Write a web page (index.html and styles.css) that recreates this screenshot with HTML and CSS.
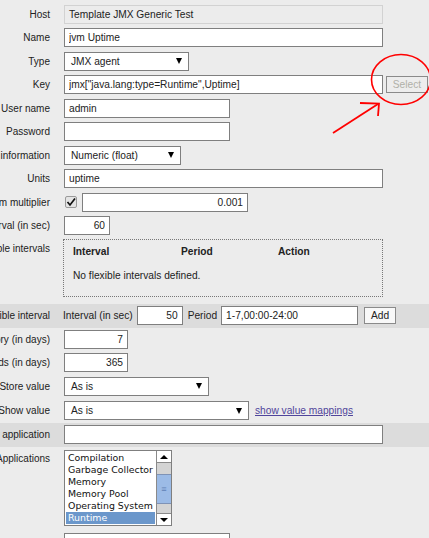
FILE: index.html
```html
<!DOCTYPE html>
<html>
<head>
    <title>Item configuration</title>
    <link rel="stylesheet" href="styles.css">
</head>
<body>
    <div class="form">
        <div class="row">
            <div class="label">Host</div>
            <div class="field"><div class="static w-wide">Template JMX Generic Test</div></div>
        </div>
        <div class="row">
            <div class="label">Name</div>
            <div class="field"><input class="text w-wide" type="text" value="jvm Uptime"></div>
        </div>
        <div class="row">
            <div class="label">Type</div>
            <div class="field"><div class="select w-type"><span>JMX agent</span><i class="arrow"></i></div></div>
        </div>
        <div class="row">
            <div class="label">Key</div>
            <div class="field">
                <input class="text w-wide" type="text" value='jmx["java.lang:type=Runtime",Uptime]'>
                <button class="btn btn-select" disabled>Select</button>
            </div>
        </div>
        <div class="row">
            <div class="label">User name</div>
            <div class="field"><input class="text w-user" type="text" value="admin"></div>
        </div>
        <div class="row">
            <div class="label">Password</div>
            <div class="field"><input class="text w-user" type="password" value=""></div>
        </div>
        <div class="row">
            <div class="label">Type of information</div>
            <div class="field"><div class="select w-info"><span>Numeric (float)</span><i class="arrow"></i></div></div>
        </div>
        <div class="row">
            <div class="label">Units</div>
            <div class="field"><input class="text w-wide" type="text" value="uptime"></div>
        </div>
        <div class="row">
            <div class="label">Use custom multiplier</div>
            <div class="field">
                <span class="check">
                    <svg width="10" height="10" viewBox="0 0 10 10"><path d="M1.5 5 L4 8 L9 1.5" fill="none" stroke="#111" stroke-width="1.7"/></svg>
                </span>
                <input class="text num w-mult" type="text" value="0.001">
            </div>
        </div>
        <div class="row">
            <div class="label">Update interval (in sec)</div>
            <div class="field"><input class="text num w-small" type="text" value="60"></div>
        </div>
        <div class="row row-top row-flex">
            <div class="label">Flexible intervals</div>
            <div class="field">
                <div class="intervals">
                    <div class="int-head">
                        <span class="col-interval">Interval</span>
                        <span class="col-period">Period</span>
                        <span>Action</span>
                    </div>
                    <div class="int-empty">No flexible intervals defined.</div>
                </div>
            </div>
        </div>
        <div class="row band">
            <div class="label">New flexible interval</div>
            <div class="field field-new">
                <span>Interval (in sec)</span>
                <input class="text num w-small" type="text" value="50">
                <span class="period-label">Period</span>
                <input class="text w-period" type="text" value="1-7,00:00-24:00">
                <button class="btn btn-add">Add</button>
            </div>
        </div>
        <div class="row">
            <div class="label">Keep history (in days)</div>
            <div class="field"><input class="text num w-days" type="text" value="7"></div>
        </div>
        <div class="row">
            <div class="label">Keep trends (in days)</div>
            <div class="field"><input class="text num w-days" type="text" value="365"></div>
        </div>
        <div class="row">
            <div class="label">Store value</div>
            <div class="field"><div class="select w-store"><span>As is</span><i class="arrow"></i></div></div>
        </div>
        <div class="row row-show">
            <div class="label">Show value</div>
            <div class="field">
                <div class="select w-show"><span>As is</span><i class="arrow"></i></div>
                <a class="mappings" href="#">show value mappings</a>
            </div>
        </div>
        <div class="row band">
            <div class="label">New application</div>
            <div class="field"><input class="text w-wide" type="text" value=""></div>
        </div>
        <div class="row row-top row-apps">
            <div class="label">Applications</div>
            <div class="field">
                <div class="listbox">
                    <ul class="options">
                        <li>Compilation</li>
                        <li>Garbage Collector</li>
                        <li>Memory</li>
                        <li>Memory Pool</li>
                        <li>Operating System</li>
                        <li class="selected">Runtime</li>
                    </ul>
                    <div class="scrollbar">
                        <div class="sb-btn"><i class="up"></i></div>
                        <div class="sb-track"><div class="sb-thumb">&#8801;</div></div>
                        <div class="sb-btn"><i class="down"></i></div>
                    </div>
                </div>
            </div>
        </div>
        <div class="row">
            <div class="label">Populates host profile field</div>
            <div class="field"><input class="text w-user" type="text" value=""></div>
        </div>
    </div>

    <!-- hand drawn marks over the key row -->
    <svg class="marks" width="429" height="538" viewBox="0 0 429 538">
        <ellipse cx="401" cy="79.5" rx="29.5" ry="25" fill="none" stroke="#f00" stroke-width="1.6"/>
        <path d="M333 133 L378 104" fill="none" stroke="#f00" stroke-width="1.8"/>
        <path d="M360 103 L379 103.5 L378 116" fill="none" stroke="#f00" stroke-width="1.8"/>
    </svg>
</body>
</html>
```

FILE: styles.css
```css
body {
    margin: 0;
    background-color: #ececec;
    font-family: "Liberation Sans", Arial, sans-serif;
    font-size: 10.2px;
    color: #222;
    overflow: hidden;
}
.form {
    padding-top: 2.25px;
}
.row {
    display: flex;
    align-items: center;
    height: 23.5px;
}
.row-top {
    align-items: flex-start;
    height: auto;
}
.row-show {
    height: 25px;
}
.band {
    background-color: #dcdcdc;
}
.label {
    width: 50px;
    flex: none;
    display: flex;
    justify-content: flex-end;
    white-space: nowrap;
    font-size: 10px;
}
.field {
    margin-left: 14px;
    display: flex;
    align-items: center;
}

/* inputs */
.text {
    box-sizing: border-box;
    height: 19px;
    margin: 0;
    padding: 0 4px;
    border: 1px solid #7f7f7f;
    background-color: #fff;
    font: inherit;
    color: #222;
    outline: none;
}
.num {
    text-align: right;
}
.static {
    box-sizing: border-box;
    height: 19px;
    padding: 0 4px;
    line-height: 17px;
    border: 1px solid #d2d2d2;
    background-color: #ececec;
    white-space: nowrap;
}
.w-wide { width: 319px; }
.w-user { width: 166px; }
.w-mult { width: 166px; }
.w-small { width: 46px; }
.w-days { width: 64px; }
.w-period { width: 137px; }
.w-type { width: 125px; }
.w-info { width: 117px; }
.w-store { width: 145px; }
.w-show { width: 185px; }

.select {
    box-sizing: border-box;
    height: 19px;
    display: flex;
    align-items: center;
    justify-content: space-between;
    padding: 0 6px 0 6px;
    border: 1px solid #7f7f7f;
    background-color: #fff;
}
.arrow {
    width: 0;
    height: 0;
    border-left: 3px solid transparent;
    border-right: 3px solid transparent;
    border-top: 6px solid #000;
}

.btn {
    box-sizing: border-box;
    margin: 0;
    padding: 0;
    font: inherit;
    border: 1px solid #8a8a8a;
    border-radius: 0;
}
.btn-select {
    width: 42px;
    height: 17px;
    margin-left: 3px;
    background-color: #ededed;
    color: #b0b0a8;
}
.btn-add {
    width: 32px;
    height: 17px;
    margin-left: 6px;
    background-color: #f8f8f8;
    color: #222;
}

.check {
    box-sizing: border-box;
    width: 12px;
    height: 12px;
    margin: 0 5px 0 1px;
    display: flex;
    align-items: center;
    justify-content: center;
    border: 1px solid #9a9a9a;
    border-radius: 2px;
    background-color: #e4e4e4;
}

/* flexible intervals */
.row-flex .label {
    padding-top: 6px;
}
.intervals {
    box-sizing: border-box;
    width: 320px;
    height: 58px;
    margin: 1.75px 0 7px -1px;
    padding: 6px 0 0 9px;
    border: 1px dotted #777;
    line-height: 12px;
}
.int-head {
    display: flex;
    font-weight: bold;
}
.col-interval { width: 108px; }
.col-period { width: 97px; }
.int-empty {
    margin-top: 12px;
}
.field-new {
    margin-left: 13px;
}
.field-new .text.w-small {
    margin-left: 4px;
}
.period-label {
    margin: 0 4px 0 5px;
}

.mappings {
    margin-left: 6px;
    color: #50459b;
}

/* applications list */
.row-apps .label {
    padding-top: 6px;
}
.listbox {
    box-sizing: border-box;
    width: 108px;
    height: 76px;
    margin: 3.5px 0 4.5px 0;
    display: flex;
    border: 1px solid #7f7f7f;
    background-color: #fff;
}
.options {
    list-style: none;
    margin: 0;
    padding: 1px 1px 0 1px;
    flex: 1;
    font-family: "DejaVu Sans", sans-serif;
    font-size: 9.4px;
    line-height: 12px;
    color: #111;
}
.options li {
    padding-left: 2px;
    white-space: nowrap;
}
.options .selected {
    background-color: #6b97cb;
    color: #fff;
}
.scrollbar {
    width: 14px;
    display: flex;
    flex-direction: column;
    border-left: 1px solid #8a8a8a;
    background-color: #d4d4d4;
}
.sb-btn {
    height: 11px;
    display: flex;
    align-items: center;
    justify-content: center;
    background-color: #fff;
    border-bottom: 1px solid #8a8a8a;
}
.sb-btn:last-child {
    border-bottom: none;
    border-top: 1px solid #8a8a8a;
}
.up, .down {
    width: 0;
    height: 0;
    border-left: 4px solid transparent;
    border-right: 4px solid transparent;
}
.up { border-bottom: 4px solid #000; }
.down { border-top: 4px solid #000; }
.sb-track {
    flex: 1;
    padding-top: 11px;
}
.sb-thumb {
    box-sizing: border-box;
    height: 30px;
    border-top: 1px solid #7f93b6;
    border-bottom: 1px solid #7f93b6;
    background-color: #9cbbe6;
    color: #5f7fb5;
    font-size: 9px;
    line-height: 28px;
    text-align: center;
}

.marks {
    position: absolute;
    top: 0;
    left: 0;
    pointer-events: none;
}
```
